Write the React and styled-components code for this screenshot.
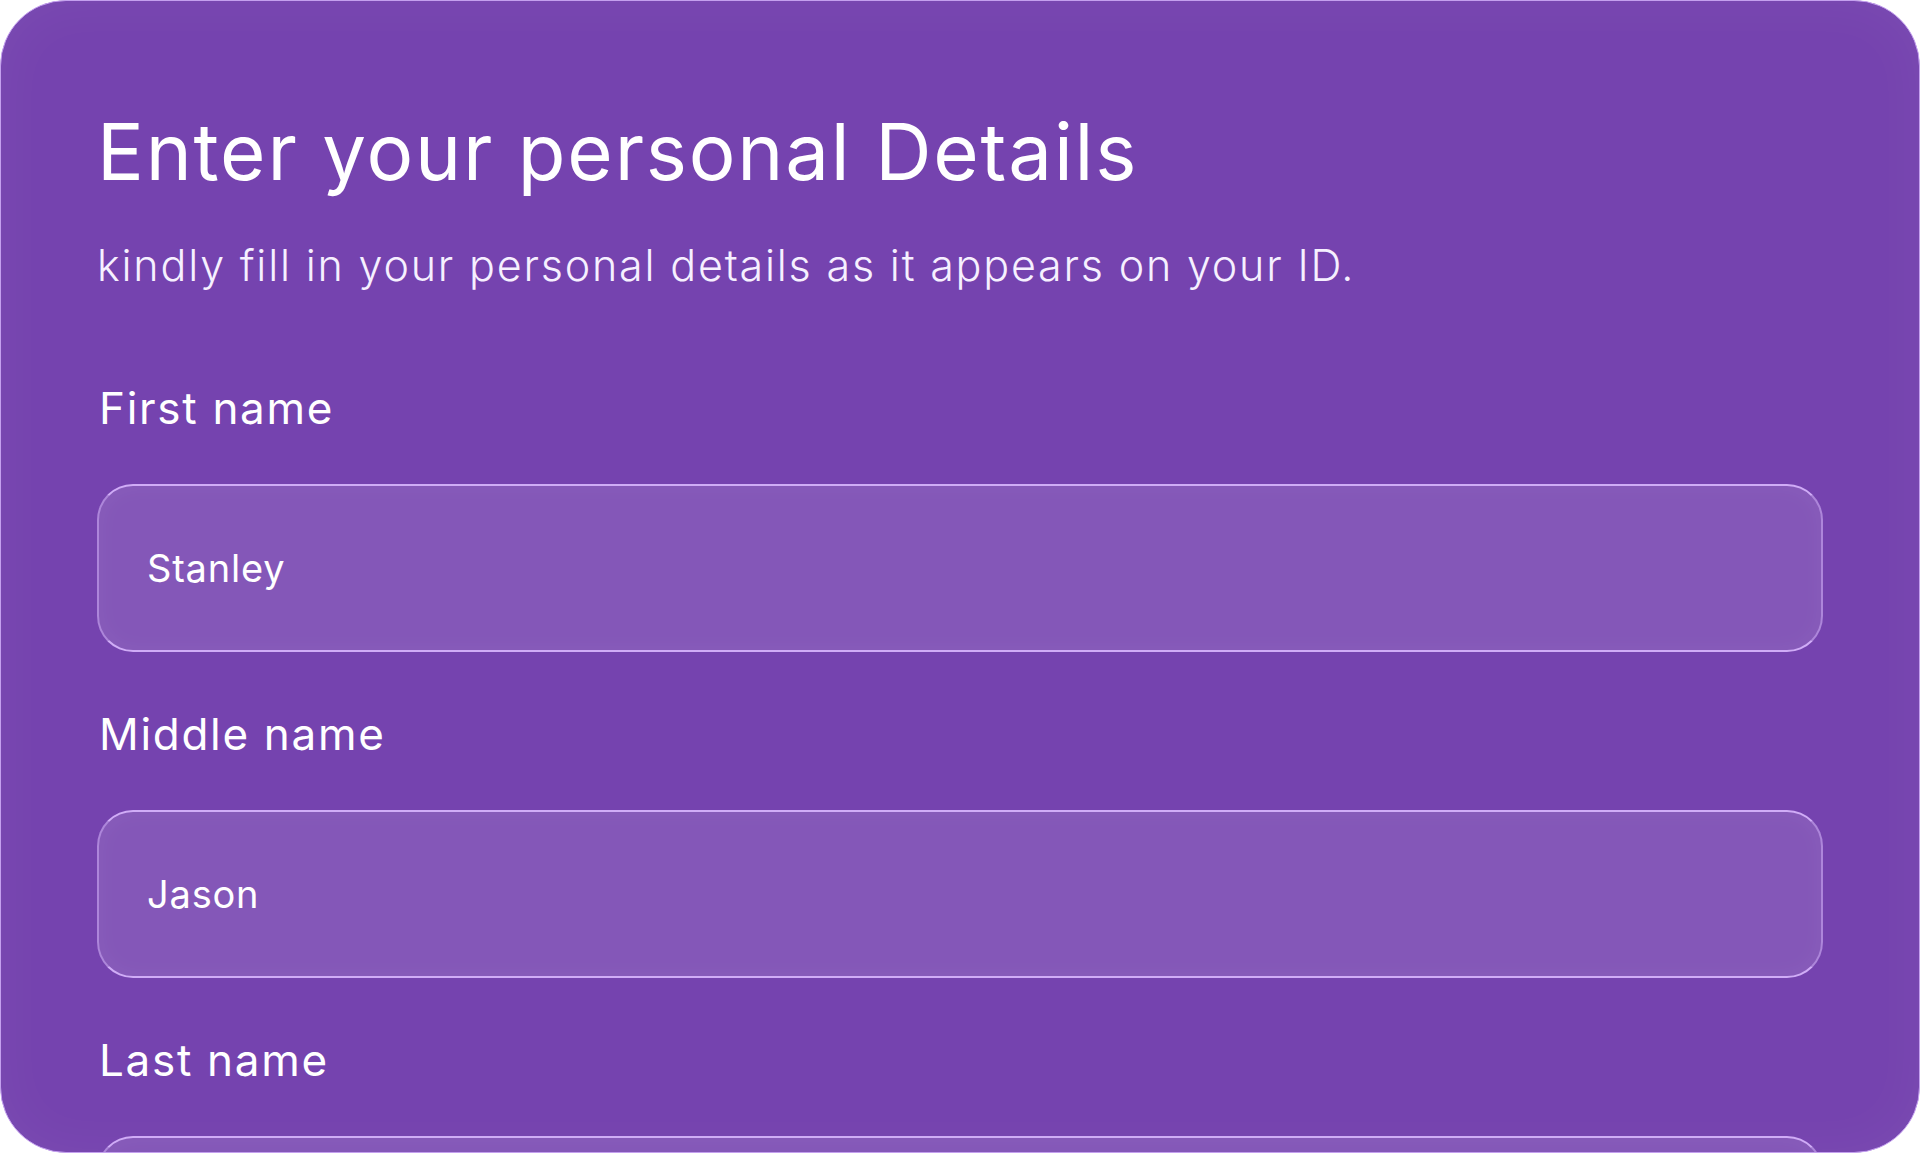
import styled, { createGlobalStyle } from "styled-components";

const GlobalStyle = createGlobalStyle`
  html, body {
    margin: 0;
    padding: 0;
    background: #ffffff;
  }
  body {
    font-family: Inter, "Liberation Sans", sans-serif;
  }
`;

const fields = [
  { label: "First name", value: "Stanley" },
  { label: "Middle name", value: "Jason" },
  { label: "Last name", value: "" },
];

export default function App() {
  return (
    <>
      <GlobalStyle />
      <Card>
        <Title>Enter your personal Details</Title>
        <Subtitle>kindly fill in your personal details as it appears on your ID.</Subtitle>
        <Form>
          {fields.map((f) => (
            <Field key={f.label}>
              <Label>{f.label}</Label>
              <Input type="text" defaultValue={f.value} name={f.label} />
            </Field>
          ))}
        </Form>
      </Card>
    </>
  );
}

const Card = styled.div`
  box-sizing: border-box;
  width: 100vw;
  height: 100vh;
  overflow: hidden;
  background: #7543af;
  border: 1.5px solid #c4a0ef;
  border-radius: 66px;
  box-shadow: inset 0 0 60px rgba(255, 255, 255, 0.05);
  padding: 112px 96px 0 96px;
  color: #ffffff;
`;

const Title = styled.h1`
  margin: 0;
  font-size: 78px;
  font-weight: 400;
  line-height: 1;
  letter-spacing: 1.8px;
`;

const Subtitle = styled.p`
  margin: 53px 0 0;
  font-size: 43px;
  font-weight: 300;
  line-height: 1;
  letter-spacing: 1.8px;
  color: #f6f0ff;
`;

const Form = styled.form`
  display: flex;
  flex-direction: column;
  gap: 60px;
  margin-top: 99px;
`;

const Field = styled.div`
  display: flex;
  flex-direction: column;
  gap: 54px;
`;

const Label = styled.label`
  font-size: 44px;
  line-height: 1;
  font-weight: 400;
  letter-spacing: 1.7px;
  padding-left: 2px;
`;

const Input = styled.input`
  box-sizing: border-box;
  width: 100%;
  height: 168px;
  padding: 0 48px;
  border-radius: 36px;
  border: 2px solid rgba(214, 182, 252, 0.5);
  border-top-color: rgba(212, 178, 250, 0.95);
  border-bottom-color: rgba(212, 178, 250, 0.95);
  background: #8457b8;
  box-shadow: inset 0 0 26px rgba(255, 255, 255, 0.05);
  color: #ffffff;
  font-family: Inter, "Liberation Sans", sans-serif;
  font-size: 38px;
  font-weight: 400;
  letter-spacing: 0.8px;
  outline: none;
`;
